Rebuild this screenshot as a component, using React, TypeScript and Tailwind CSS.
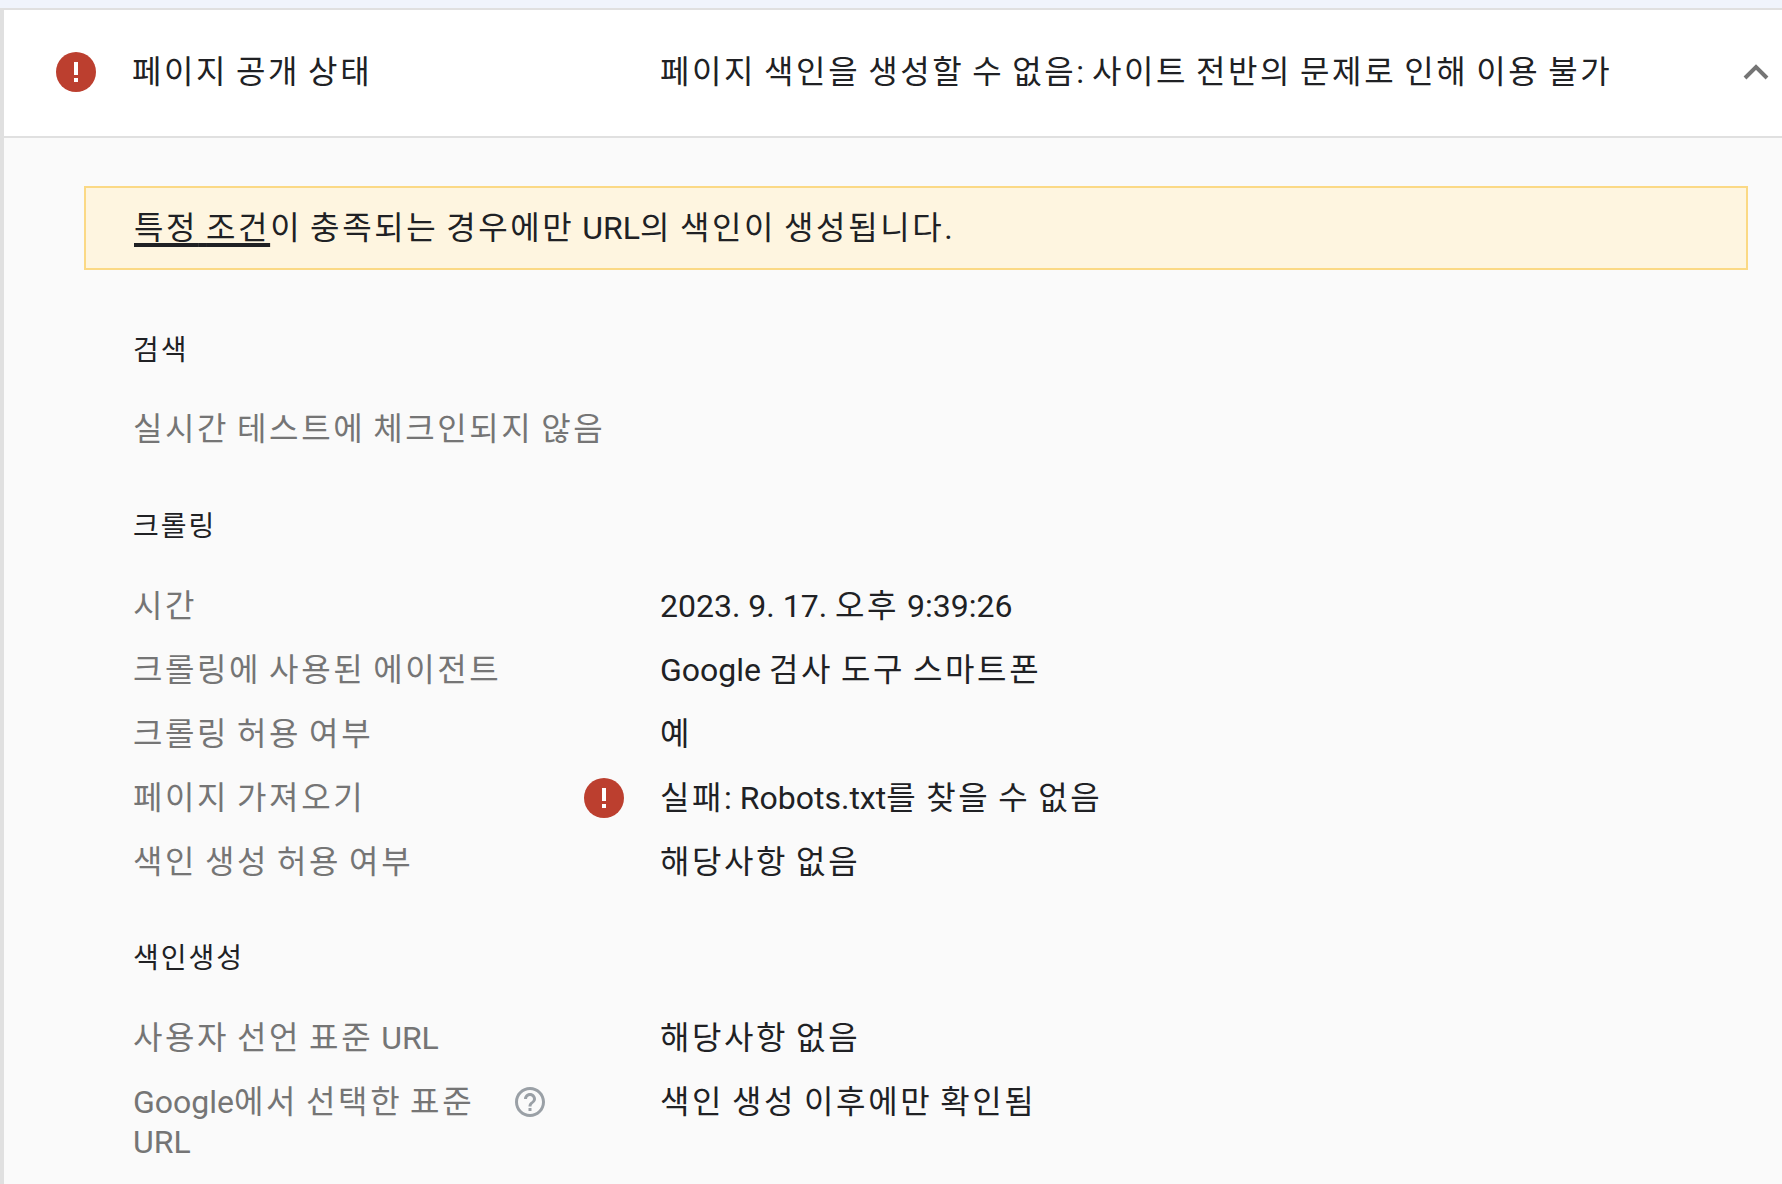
function K({ t, cls = "tracking-[2.6px]" }: { t: string; cls?: string }) {
  const parts = t.split(/([\uAC00-\uD7A3]+)/);
  return (
    <>
      {parts.map((p, i) => (i % 2 === 1 ? <span key={i} className={cls}>{p}</span> : <span key={i}>{p}</span>))}
    </>
  );
}

function ErrorIcon() {
  return (
    <svg width="40" height="40" viewBox="0 0 40 40" className="shrink-0">
      <circle cx="20" cy="20" r="20" fill="#bc3f2f" />
      <rect x="18" y="10" width="4" height="13" fill="#fff" />
      <rect x="18" y="26" width="4" height="4" fill="#fff" />
    </svg>
  );
}

function HelpIcon() {
  return (
    <svg width="36" height="36" viewBox="0 0 24 24" fill="#9aa0a6">
      <path d="M12 2C6.48 2 2 6.48 2 12s4.48 10 10 10 10-4.48 10-10S17.52 2 12 2zm0 18c-4.41 0-8-3.59-8-8s3.59-8 8-8 8 3.59 8 8-3.59 8-8 8z" />
      <path d="M11 16h2v2h-2z" />
      <path d="M12 6c-2.21 0-4 1.79-4 4h2c0-1.1.9-2 2-2s2 .9 2 2c0 2-3 1.75-3 5h2c0-2.25 3-2.5 3-5 0-2.21-1.79-4-4-4z" />
    </svg>
  );
}

function Row({ label, value, error }: { label: string; value: string; error?: boolean }) {
  return (
    <div className="flex h-[64px] items-center">
      <div className="w-[450px] text-[#757575]"><K t={label} /></div>
      <div className="flex w-[77px] justify-start pl-[1px]">{error && <ErrorIcon />}</div>
      <div className="text-[#202124]"><K t={value} /></div>
    </div>
  );
}

export default function App() {
  return (
    <div
      className="h-[1184px] w-[1782px] overflow-hidden bg-[#f0f4fc] pt-[8px] text-[32px] leading-[40px] text-[#202124]"
      style={{ fontFamily: 'Roboto, "Noto Sans CJK KR", sans-serif' }}
    >
      <div className="h-full border-t-2 border-l-4 border-[#e0e0e0] bg-[#fafafa]">
        <div className="flex h-[128px] items-center border-b-2 border-[#e0e0e0] bg-white pb-[2px] pl-[52px] pr-[12px]">
          <ErrorIcon />
          <div className="ml-[36px] w-[528px]"><K t="페이지 공개 상태" /></div>
          <div className="flex-1"><K t="페이지 색인을 생성할 수 없음: 사이트 전반의 문제로 인해 이용 불가" /></div>
          <svg width="28" height="18" viewBox="0 0 28 18" fill="none" stroke="#757575" strokeWidth="4">
            <path d="M3 15 L14 4 L25 15" />
          </svg>
        </div>
        <div className="pl-[80px] pr-[34px] pt-[48px]">
          <div className="flex h-[84px] items-center border-2 border-[#fbd985] bg-[#fef5e0] pl-[48px]">
            <span className="underline decoration-[4px] underline-offset-[4px] [text-decoration-skip-ink:none]"><K t="특정 조건" /></span>
            <span><K t="이 충족되는 경우에만 URL의 색인이 생성됩니다." /></span>
          </div>
          <div className="pl-[49px]">
            <div className="mt-[61px] text-[28px] leading-[40px]"><K t="검색" cls="tracking-[2px]" /></div>
            <div className="mt-[38px] text-[#757575]"><K t="실시간 테스트에 체크인되지 않음" /></div>
            <div className="mt-[58px] text-[28px] leading-[40px]"><K t="크롤링" cls="tracking-[2px]" /></div>
            <div className="mt-[27px]">
              <Row label="시간" value="2023. 9. 17. 오후 9:39:26" />
              <Row label="크롤링에 사용된 에이전트" value="Google 검사 도구 스마트폰" />
              <Row label="크롤링 허용 여부" value="예" />
              <Row label="페이지 가져오기" value="실패: Robots.txt를 찾을 수 없음" error />
              <Row label="색인 생성 허용 여부" value="해당사항 없음" />
            </div>
            <div className="mt-[45px] text-[28px] leading-[40px]"><K t="색인생성" cls="tracking-[2px]" /></div>
            <div className="mt-[27px]">
              <Row label="사용자 선언 표준 URL" value="해당사항 없음" />
              <div className="flex items-start pt-[12px]">
                <div className="flex w-[450px] items-start">
                  <div className="w-[360px] text-[#757575]"><K t="Google에서 선택한 표준 URL" /></div>
                  <div className="ml-[19px] mt-[2px]"><HelpIcon /></div>
                </div>
                <div className="w-[77px]" />
                <div><K t="색인 생성 이후에만 확인됨" /></div>
              </div>
            </div>
          </div>
        </div>
      </div>
    </div>
  );
}
